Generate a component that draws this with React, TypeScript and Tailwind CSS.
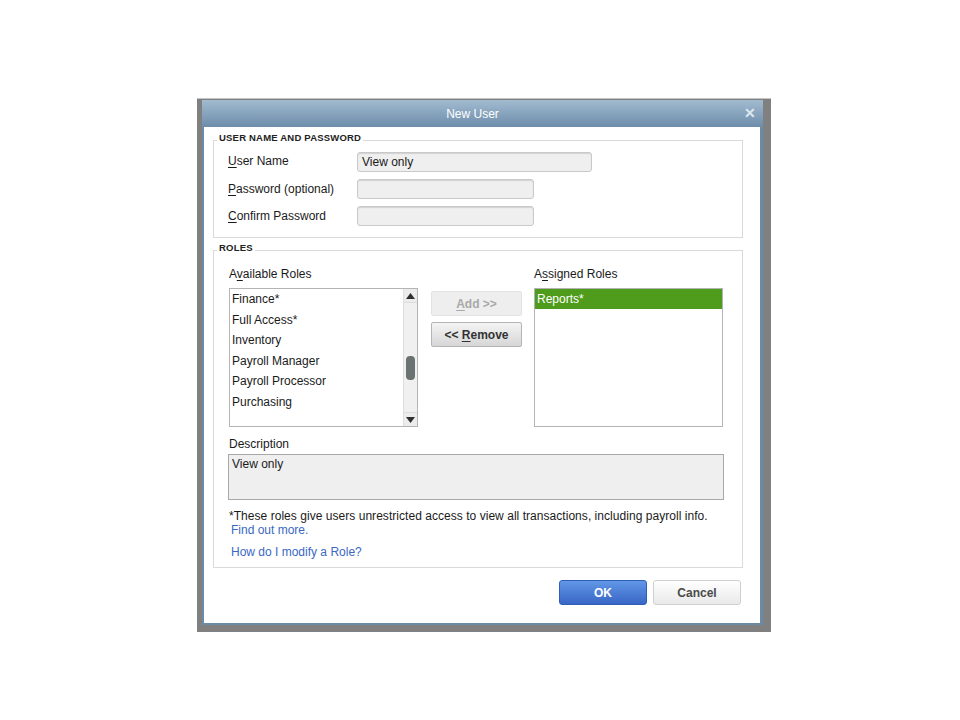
import React from "react";

const font = { fontFamily: '"Liberation Sans", Arial, sans-serif' };

function U({ children }: { children: React.ReactNode }) {
  return <span className="underline underline-offset-[2px]">{children}</span>;
}

function Input({ w, value }: { w: string; value?: string }) {
  return (
    <div
      className={`${w} h-[20px] rounded-[3px] border border-[#c9c9c9] bg-[#efefef] shadow-[inset_0_1px_1px_rgba(0,0,0,0.12)] px-[4px] text-[12px] leading-[18px] text-[#1a1a1a]`}
    >
      {value}
    </div>
  );
}

export default function App() {
  const roles = ["Finance*", "Full Access*", "Inventory", "Payroll Manager", "Payroll Processor", "Purchasing"];
  return (
    <div className="w-[960px] h-[720px] bg-white pt-[98px] pl-[197px]" style={font}>
      <div className="w-[574px] h-[534px] bg-[#808080] border-t border-[#c4c4c4] pl-[5px] pt-[1px]">
        <div className="w-[561px] h-[525px] flex flex-col bg-[#6b8aa5] pl-[2px] pr-[3px] pb-[2px]">
          {/* Title bar */}
          <div className="h-[27px] -mx-[2px] -mr-[3px] bg-gradient-to-b from-[#a2bbd0] to-[#6d8dab] flex items-center relative pr-[20px]">
            <div className="flex-1 text-center text-white text-[12px]">New User</div>
            <div className="absolute right-[7px] top-[6px] text-[#dfe7ee] text-[14px] font-bold leading-[14px]">✕</div>
          </div>
          {/* Content */}
          <div className="flex-1 bg-white flex flex-col pl-[9px] text-[12px] text-[#1a1a1a]">
            {/* Group 1 */}
            <div className="relative mt-[13px] w-[530px] h-[98px] border border-[#dadada] pt-[11px] pl-[14px]">
              <div className="absolute left-[3px] -top-[10px] bg-white px-[2px] text-[9.5px] font-bold text-[#222] tracking-[0.2px] leading-[14px]">
                USER NAME AND PASSWORD
              </div>
              <div className="flex flex-col gap-[7px]">
                <div className="flex items-center">
                  <div className="w-[129px] -mt-[2px]"><U>U</U>ser Name</div>
                  <Input w="w-[235px]" value="View only" />
                </div>
                <div className="flex items-center">
                  <div className="w-[129px]"><U>P</U>assword (optional)</div>
                  <Input w="w-[177px]" />
                </div>
                <div className="flex items-center">
                  <div className="w-[129px]"><U>C</U>onfirm Password</div>
                  <Input w="w-[177px]" />
                </div>
              </div>
            </div>
            {/* Group 2 */}
            <div className="relative mt-[12px] w-[530px] h-[318px] border border-[#dadada] pt-[16px] pl-[15px]">
              <div className="absolute left-[3px] -top-[10px] bg-white px-[2px] text-[9.5px] font-bold text-[#222] tracking-[0.2px] leading-[14px]">
                ROLES
              </div>
              <div className="flex">
                <div className="flex flex-col">
                  <div className="h-[14px] leading-[14px]">A<U>v</U>ailable Roles</div>
                  <div className="mt-[7px] w-[189px] h-[139px] border border-[#b4b4b4] flex">
                    <div className="flex-1 flex flex-col pl-[2px]">
                      {roles.map((r) => (
                        <div key={r} className="h-[20.6px] leading-[20px]">{r}</div>
                      ))}
                    </div>
                    <div className="w-[14px] bg-[#f0f0f0] border-l border-[#dedede] flex flex-col items-center">
                      <div className="h-[14px] w-full flex items-center justify-center border-b border-[#dcdcdc] bg-[#ececec]">
                        <svg width="9" height="6" viewBox="0 0 9 6"><path d="M0 6 L4.5 0 L9 6 Z" fill="#2f2f2f" /></svg>
                      </div>
                      <div className="mt-[53px] w-[9px] h-[24px] rounded-[4px] bg-[#6b7272]" />
                      <div className="flex-1" />
                      <div className="h-[14px] w-full flex items-center justify-center border-t border-[#dcdcdc] bg-[#ececec]">
                        <svg width="9" height="6" viewBox="0 0 9 6"><path d="M0 0 L4.5 6 L9 0 Z" fill="#2f2f2f" /></svg>
                      </div>
                    </div>
                  </div>
                </div>
                <div className="flex flex-col ml-[13px] pt-[24px] gap-[6px]">
                  <div className="w-[91px] h-[25px] rounded-[2px] border border-[#e3e3e3] bg-[#eeeeee] flex items-center justify-center font-bold text-[#a9a9a9]">
                    <span><U>A</U>dd &gt;&gt;</span>
                  </div>
                  <div className="w-[91px] h-[25px] rounded-[2px] border border-[#b5b5b5] bg-gradient-to-b from-[#f4f4f4] to-[#d6d6d6] flex items-center justify-center font-bold text-[#333]">
                    <span>&lt;&lt; <U>R</U>emove</span>
                  </div>
                </div>
                <div className="flex flex-col ml-[12px]">
                  <div className="h-[14px] leading-[14px]">A<U>s</U>signed Roles</div>
                  <div className="mt-[7px] w-[189px] h-[139px] border border-[#b4b4b4]">
                    <div className="h-[20px] bg-[#4f9b1b] text-white pl-[2px] leading-[20px]">Reports*</div>
                  </div>
                </div>
              </div>
              <div className="mt-[10px] h-[14px] leading-[14px]">Description</div>
              <div className="mt-[3px] -ml-[1px] w-[496px] h-[46px] border border-[#a8a8a8] bg-[#efefef] px-[3px] pt-[2px] leading-[14px]">
                View only
              </div>
              <div className="mt-[9px] leading-[14px] tracking-[0.04px]">
                *These roles give users unrestricted access to view all transactions, including payroll info.
              </div>
              <div className="leading-[14px] pl-[2px] text-[#3a68c4]">Find out more.</div>
              <div className="mt-[8px] leading-[14px] pl-[2px] text-[#3a68c4]">How do I modify a Role?</div>
            </div>
            {/* Buttons */}
            <div className="mt-[12px] flex justify-end gap-[6px] pr-[19px]">
              <div className="w-[88px] h-[25px] rounded-[3px] border border-[#2f5fb4] bg-gradient-to-b from-[#6297e6] to-[#3866c6] flex items-center justify-center text-white font-bold">
                OK
              </div>
              <div className="w-[88px] h-[25px] rounded-[3px] border border-[#cfcfcf] bg-gradient-to-b from-[#ffffff] to-[#e9e9e9] flex items-center justify-center text-[#4a4a4a] font-bold">
                Cancel
              </div>
            </div>
          </div>
        </div>
      </div>
    </div>
  );
}
